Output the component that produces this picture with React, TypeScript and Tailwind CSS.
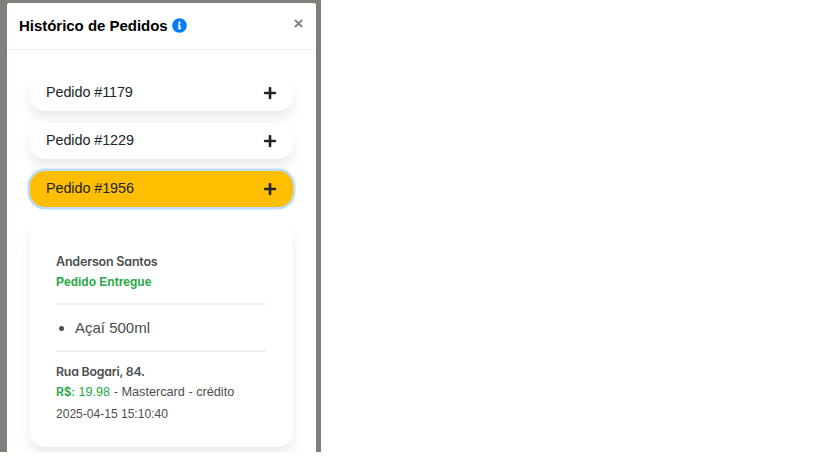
import { FaInfoCircle, FaPlus } from "react-icons/fa";

type OrderButtonProps = { id: number; active?: boolean };

const shadow = "shadow-[0_8px_14px_-1px_rgba(0,0,0,0.09)]";

function OrderButton({ id, active = false }: OrderButtonProps) {
  return (
    <button
      className={
        "flex h-9 w-full shrink-0 items-center justify-between rounded-[15px] pb-px pl-4 pr-4 text-[14.4px] text-[#212529] " +
        (active
          ? "bg-[#ffbf00] shadow-[0_0_0_2.5px_#bcdcfb]"
          : "bg-white " + shadow)
      }
    >
      <span className="-mt-px leading-5 tracking-[-0.08px]">Pedido #{id}</span>
      <FaPlus className="mt-px size-[14px]" />
    </button>
  );
}

const displayFont =
  "font-['Inter',sans-serif] [font-feature-settings:'cv11'] font-semibold tracking-[-0.2px]";

export default function App() {
  return (
    <div className="h-[460px] w-[819px] overflow-hidden bg-white font-['Liberation_Sans',Arial,sans-serif]">
      <div className="h-[452px] w-[321px] overflow-hidden bg-[#807f7a] pl-[7px] pr-[5.5px] pt-[3px]">
        <div className="h-[480px] rounded-t-[2px] bg-white">
          <header className="flex h-[47px] items-start border-b border-[#f1f1f1] pl-3 pr-3">
            <h1 className="mt-[13px] text-[15px] font-bold leading-5 tracking-[-0.03px] text-black">
              Histórico de Pedidos
            </h1>
            <FaInfoCircle className="ml-[4.5px] mt-[15px] size-[15px] text-[#007bff]" />
            <button aria-label="Fechar" className="ml-auto mt-[11px] text-[17px] font-bold leading-5 text-[#7f7f7f]">
              ×
            </button>
          </header>
          <main className="flex flex-col gap-3 pl-[23px] pr-[22.5px] pt-[24.5px]">
            <OrderButton id={1179} />
            <OrderButton id={1229} />
            <OrderButton id={1956} active />
            <section className={"h-[228px] rounded-[15px] bg-white px-[26px] pt-[33px] text-[#4d4d4d] " + shadow}>
              <p className={"text-[12.5px] leading-5 " + displayFont}>Anderson Santos</p>
              <p className="text-[12px] font-bold leading-5 text-[#28a745]">Pedido Entregue</p>
              <hr className="mr-px mt-[11px] border-t-2 border-[#f0f0f0]" />
              <ul className="mt-[11px] list-disc pl-[19px] text-[15px] leading-6">
                <li>Açaí 500ml</li>
              </ul>
              <hr className="mr-px mt-[10px] border-t-2 border-[#f0f0f0]" />
              <p className={"mt-[10px] text-[12.3px] leading-5 " + displayFont}>Rua Bogari, 84.</p>
              <p className="-mt-px text-[12.7px] leading-[21px]">
                <span className="text-[#28a745]">
                  <span className={"text-[12px] " + displayFont}>R$:</span> 19.98
                </span>{" "}
                - Mastercard - crédito
              </p>
              <p className="text-[12.05px] leading-[22px]">2025-04-15 15:10:40</p>
            </section>
          </main>
        </div>
      </div>
    </div>
  );
}
